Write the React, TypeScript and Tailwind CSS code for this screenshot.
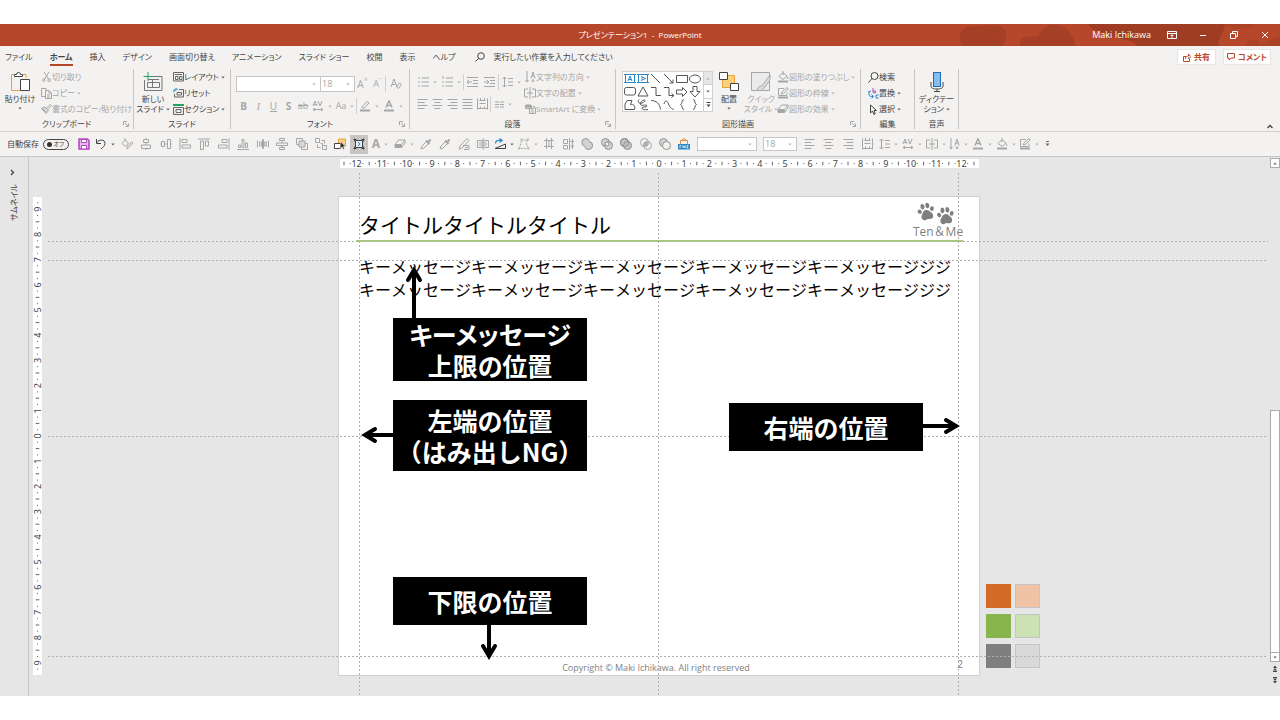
import React from "react";

type Kids = { children?: React.ReactNode };

/* ---------- small building blocks ---------- */

function Icon({ w = 12, h = 12, className = "", children }: Kids & { w?: number; h?: number; className?: string }) {
  return (
    <svg width={w} height={h} viewBox={`0 0 ${w} ${h}`} fill="none" stroke="currentColor" strokeWidth="1" className={`shrink-0 ${className}`} aria-hidden="true">
      {children}
    </svg>
  );
}

function Caret({ className = "" }: { className?: string }) {
  return (
    <svg width="4" height="3" viewBox="0 0 4 3" fill="currentColor" className={`shrink-0 opacity-80 ${className}`} aria-hidden="true">
      <path d="M.3 .6h3.400L2 2.500z" />
    </svg>
  );
}

function Tool({ label, caret, className = "", children }: Kids & { label: string; caret?: boolean; className?: string }) {
  return (
    <button type="button" aria-label={label} className={`flex h-4 items-center justify-center gap-1 ${className}`}>
      {children}
      {caret && <Caret />}
    </button>
  );
}

function Row({ icon, text, caret, className = "" }: { icon: React.ReactNode; text: string; caret?: boolean; className?: string }) {
  return (
    <button type="button" className={`flex h-4 items-center whitespace-nowrap ${className}`}>
      <span className="flex w-3 justify-center">{icon}</span>
      <span>{text}</span>
      {caret && <Caret className="ml-[2px]" />}
    </button>
  );
}

function Group({ label, launcher, className, children }: Kids & { label: string; launcher?: boolean; className: string }) {
  return (
    <section aria-label={label} className={`flex shrink-0 flex-col border-r border-[#c8c6c4] ${className}`}>
      <div className="flex h-12 items-start">{children}</div>
      <div className="relative flex h-3 items-center justify-center pt-[2px] leading-3">
        {label}
        {launcher && (
          <button type="button" aria-label={`${label}の詳細`} className="absolute right-1 top-1 text-[#a6a6a6]">
            <Icon w={6} h={6}>
              <path d="M.5 4V.5H4M2 2l3 3M5.500 2.500v3h-3" />
            </Icon>
          </button>
        )}
      </div>
    </section>
  );
}

function Combo({ label, value, className }: { label: string; value: string; className: string }) {
  return (
    <label className={`relative flex items-center border border-[#c8c6c4] bg-white text-[#a6a6a6] ${className}`}>
      <select aria-label={label} defaultValue={value} className="h-full w-full appearance-none bg-transparent pl-px text-[9px] leading-3 outline-none">
        <option value={value}>{value}</option>
      </select>
      <Caret className="pointer-events-none absolute right-1" />
    </label>
  );
}

const Bar = () => <span className="h-4 w-px shrink-0 bg-[#d2d0ce]" />;

/* ---------- icons ---------- */

const Lines = ({ d }: { d: string }) => (
  <Icon w={11} h={12}>
    <path d={d} />
  </Icon>
);
const AlignLeft = () => <Lines d="M.5 1.500h10M.5 4.500h7M.5 7.500h10M.5 10.500h7" />;
const AlignCenter = () => <Lines d="M.5 1.500h10M2.500 4.500h6M.5 7.500h10M2.500 10.500h6" />;
const AlignRight = () => <Lines d="M.5 1.500h10M3.500 4.500h7M.5 7.500h10M3.500 10.500h7" />;
const Justify = () => <Lines d="M.5 1.500h10M.5 4.500h10M.5 7.500h10M.5 10.500h10" />;
const Distribute = () => <Lines d="M.5.500v11M10.500.500v11M2.500 2.500h6M2.500 5.500h6M.5 10.500h10M3.500 8.500v2M7.500 8.500v2M3.500 0v3M7.500 0v3" />;
const LineSpacing = () => <Lines d="M2.500 1v10M.5 3l2-2 2 2M.5 9l2 2 2-2M6 2.500h5M6 6h5M6 9.500h5" />;
const CharSpacing = () => (
  <Icon w={12} h={12}>
    <path d="M1 6l2-5 2 5M2 4.500h2M6 1l2 5 2-5M1 9.500h10M3 8l-2 1.500 2 1.500M9 8l2 1.500-2 1.500" />
  </Icon>
);
const TextAlign = () => (
  <Icon>
    <path d="M4 2H.5v8H4M8 2h3.500v8H8M6 0v12M3 6h6" />
  </Icon>
);
const TextDir = () => (
  <Icon w={11}>
    <path d="M2 0v11M.5 9L2 11l1.500-2M6 7.500l2-6.500 2 6.500M6.700 5h2.600M8 8v3M6.700 9.700L8 11l1.300-1.300" />
  </Icon>
);
const Pen = () => (
  <Icon>
    <path d="M3 7l5-5.500 2 1.500-4.500 5L3 8z" />
    <path d="M1 10.500h10" strokeWidth="2" />
  </Icon>
);
const FontColor = () => (
  <Icon>
    <path d="M3 7.500L5.800 1h.4L9 7.500M4 5.500h4" strokeWidth="1.300" />
    <path d="M1 10.500h10" strokeWidth="2" />
  </Icon>
);
const Bucket = () => (
  <Icon>
    <path d="M2 5.500L6 1.500l4 3.500-4 3.500zM6 0v4M10 5.500l1 2.500" />
    <path d="M1 10.500h10" strokeWidth="2" />
  </Icon>
);
const Outline = () => (
  <Icon>
    <path d="M10 5.500v3H1.500V1.500H7M4 7l1-2 5-4.500L11.200 2 6.500 6.500z" />
    <path d="M1 10.500h10" strokeWidth="2" />
  </Icon>
);
const Effect = () => (
  <Icon>
    <path d="M1 6.500L4.500 2H11L7.500 6.500zM1 6.500v3h6.500v-3M7.500 9.500L11 5V2" />
    <path d="M1.500 7h5.500v2H1.500z" fill="currentColor" />
  </Icon>
);
const Dropper = () => (
  <Icon>
    <path d="M1 11l1-3 4.500-4.500 2 2L4 10z" />
    <path d="M6 2.500l3.500 3.500M8 4.500l2.500-3" strokeWidth="2" />
  </Icon>
);

const arrangeIcons: [string, React.ReactNode][] = [
  ["書式", <path d="M1 5.500L4 2l3.500 3L4.500 8.500zM4 0v3M6 9l4.500-5L12 5l-4 4.500L6 11z" />],
  ["左右中央揃え", <path d="M6 0v1.500M3.500 1.500h5v3h-5zM6 4.500V7M1.500 7h9v3.500h-9zM6 10.500V12" />],
  ["上下中央揃え", <path d="M1.500 3.500h3v5h-3zM7.500 1.500h3v9h-3zM0 6h1.500M4.500 6h3M10.500 6H12" />],
  ["左揃え", <path d="M1 0v12M3 1.500h5v3H3zM3 7h8.500v3H3z" />],
  ["上揃え", <path d="M0 1h12M2.500 3h3v8.500h-3zM7.500 3h3v5h-3z" />],
  ["右揃え", <path d="M11 0v12M4 1.500h5v3H4zM.5 7H9v3H.5z" />],
  ["下揃え", <path d="M0 11.500h12M1.500 7h2v2.500h-2zM5 1.500h2v8H5zM8.500 5h2v4.500h-2z" />],
  ["左右に整列", <path d="M.5 2.500v7M11.500 2.500v7M2.500 4h2v4h-2zM7.500 4h2v4h-2zM5.500 1.500h1v9h-1z" />],
  ["上下に整列", <path d="M3.500.500h5v2h-5zM.5 5h11v2.500H.5zM3.500 9.500h5v2h-5zM6 2.500V5M6 7.500v2" />],
  ["グループ化", <g><path d="M.5.500h6v6h-6zM5.500 8v3.500h6v-6H8" /><path d="M3 3h6v6H3z" fill="#d8d8d8" /></g>],
  ["グループ解除", <path d="M.5.500h4v4h-4zM7.500 7.500h4v4h-4zM6.500 2.500h3v3M5.500 9.500h-3v-3M5.500 5.500h2v2" />],
];

const shapeIcons: [string, React.ReactNode][] = [
  ["表", <path d="M1 2.500h10M1 8.500h10M3.500 0v11M8.500 0v11M6 2.500v6" />],
  ["セル", <path d="M1.500 1.500h4v4h-4zM1.500 7.500h4v3.500h-4zM7.500 0v12M7.500 3.500H12M7.500 8H12M10.500 1v10" />],
  ["接合", <path d="M4.500.500a4 4 0 0 1 3.800 3A4 4 0 1 1 3.700 8.300 4 4 0 0 1 4.500.500z" fill="#d2d2d2" stroke="#909090" />],
  ["型抜き", <g stroke="#909090"><circle cx="4.500" cy="4.500" r="4" fill="#d2d2d2" /><circle cx="7.500" cy="7.500" r="4" fill="#d2d2d2" /><circle cx="6" cy="6" r="2" fill="#f3f2f1" /></g>],
  ["切り出し", <g stroke="#909090"><circle cx="4.500" cy="4.500" r="4" fill="#c4c4c4" /><circle cx="7.500" cy="7.500" r="4" fill="#c4c4c4" /><circle cx="4.500" cy="4.500" r="4" /></g>],
  ["重なり抽出", <g><circle cx="4.500" cy="4.500" r="4" /><circle cx="7.500" cy="7.500" r="4" /><circle cx="6" cy="6" r="2" fill="#b4b4b4" /></g>],
  ["単純型抜き", <g stroke="#909090"><circle cx="4.500" cy="4.500" r="4" fill="#d2d2d2" /><circle cx="7.500" cy="7.500" r="4" fill="#f3f2f1" /></g>],
];

const gallery: [string, React.ReactNode][] = [
  ["テキスト ボックス", <g stroke="#2b88c8"><path d="M1.500 1.500h9v8h-9z" /><path d="M4 8l2-5 2 5M5 6.500h2M0 1.500h3M9 1.500h3M0 9.500h3M9 9.500h3" /></g>],
  ["縦書きテキスト", <g stroke="#2b88c8"><path d="M1.500 1.500h9v8h-9z" /><path d="M4 3.500l4.500 2L4 7.500M5 4.500v2M0 1.500h3M9 1.500h3M0 9.500h3M9 9.500h3" /></g>],
  ["線", <path d="M1 1l9 9" />],
  ["矢印", <path d="M1 1l9 9M6.500 10h3.500V6.500" />],
  ["正方形", <path d="M.5 2.500h11v7H.5z" />],
  ["楕円", <ellipse cx="6" cy="6" rx="5.500" ry="4" />],
  ["角丸四角形", <rect x=".5" y="1.500" width="11" height="7.500" rx="2" />],
  ["三角形", <path d="M6 1l5 9H1z" />],
  ["カギ線", <path d="M1 1.500h5v8h5" />],
  ["カギ線矢印", <path d="M1 1.500h5v8h5M8.500 7.500l2.500 2-2.500 2" />],
  ["右矢印", <path d="M.5 4h6V1.500L11 6l-4.500 4.500V8h-6z" />],
  ["下矢印", <path d="M4 .5h4v5h3L6 11 1 5.500h3z" />],
  ["フリーフォーム", <path d="M1 10.500V5l2-3.500h5l-1.500 4c3-.5 5 1 4 5z" />],
  ["曲線", <path d="M2 .5C0 3 2 5 5 4s4-3 2-3-5 4-3 5 6-1 6 1-5 0-5 2 3 2 6 1.500" />],
  ["円弧", <path d="M1 1.500c5 0 9 3 9.500 9" />],
  ["フリーハンド", <path d="M1 5c1-4 3-4 4.500 0S9 10 11 10.500" />],
  ["左中かっこ", <path d="M8 .5C5 .5 7 5 4.500 5.500 7 6 5 10.500 8 10.500" />],
  ["右中かっこ", <path d="M4 .5c3 0 1 4.500 3.500 5C5 6 7 10.500 4 10.500" />],
];

/* ---------- title bar and tabs ---------- */

function TitleBar() {
  return (
    <header className="relative grid h-[22px] grid-cols-[1fr_auto_1fr] items-center overflow-hidden bg-[#b7472a] text-[8px] text-white">
      <svg className="absolute right-0 top-0" width="320" height="22" viewBox="0 0 320 22" fill="#ab4327" aria-hidden="true">
        <path d="M0 17C-2 6 6 1 18 2c8 0 12-2 22 0 8 3 8 14 2 20H2z" fill="#a54026" />
        <path d="M60 22c-2-10 8-11 18-9 4-9 10-13 19-12 12 2 18 12 18 21z" fill="#a54026" />
        <path d="M128 0h137c0 8-8 14-6 22h-82c-4-8-18-6-26-10-4-4-20-4-23-12z" fill="#9f3d24" />
        <path d="M265 0h30c-3 6-22 6-28 2zM286 22c0-8 12-9 14-2l20-8v10z" />
      </svg>
      <span />
      <span className="relative whitespace-pre">プレゼンテーション1  -  PowerPoint</span>
      <div className="relative flex items-center justify-end">
        <span className="mr-[5px] text-[9px]">Maki Ichikawa</span>
        <button type="button" aria-label="リボンの表示オプション" className="flex w-[31px] justify-center">
          <Icon w={10} h={8}><path d="M.5.500h9v7h-9zM.5 2.500h9M5 7V4M3.500 5L5 3.500 6.500 5" /></Icon>
        </button>
        <button type="button" aria-label="最小化" className="flex w-[31px] justify-center">
          <Icon w={8} h={8}><path d="M1 4.500h6" /></Icon>
        </button>
        <button type="button" aria-label="元に戻す" className="flex w-[31px] justify-center">
          <Icon w={8} h={8}><path d="M.5 2.500h5v5h-5zM2.500 2V.5h5v5H6" /></Icon>
        </button>
        <button type="button" aria-label="閉じる" className="flex w-[31px] justify-center">
          <Icon w={8} h={8}><path d="M1 1l6 6M7 1L1 7" /></Icon>
        </button>
      </div>
    </header>
  );
}

const tabs = ["ファイル", "ホーム", "挿入", "デザイン", "画面切り替え", "アニメーション", "スライド ショー", "校閲", "表示", "ヘルプ"];

function Tabs() {
  return (
    <nav className="flex h-[22px] items-center pl-[5px] pr-[9px] text-[8px]">
      <div className="flex gap-[17px]">
        {tabs.map((t) => (
          <a key={t} href="#" className={t === "ホーム" ? "border-b-2 border-[#b7472a] pt-[2px] font-bold leading-[14px]" : "pt-[2px] leading-[14px]"}>
            {t}
          </a>
        ))}
      </div>
      <label className="ml-5 flex flex-1 items-center gap-2">
        <Icon w={10} h={10}><circle cx="6" cy="4" r="3.300" /><path d="M3.600 6.400L.5 9.500" /></Icon>
        <input aria-label="操作アシスト" placeholder="実行したい作業を入力してください" className="w-40 bg-transparent leading-4 outline-none placeholder:text-[#444]" />
      </label>
      <div className="flex gap-[7px] font-bold text-[#b7472a]">
        <button type="button" className="flex h-4 w-[39px] items-center justify-center gap-[3px] border border-[#e8e6e4] bg-white">
          <Icon w={8} h={9}><path d="M3 3.500H.5v5h6V6M2.500 6c0-2 1-3 3-3V1l2.300 2.500L5.500 6V4.500" /></Icon>
          共有
        </button>
        <button type="button" className="flex h-4 w-12 items-center justify-center gap-[3px] whitespace-nowrap border border-[#e8e6e4] bg-white">
          <Icon w={8} h={8}><path d="M.5.500h7v4.500H4L2 7V5H.5z" /></Icon>
          コメント
        </button>
      </div>
    </nav>
  );
}

/* ---------- ribbon ---------- */

function BigButton({ icon, lines, caret, className }: { icon: React.ReactNode; lines: string[]; caret: "below" | "inline"; className: string }) {
  return (
    <button type="button" className={`flex shrink-0 flex-col items-center whitespace-nowrap pt-[3px] leading-[10px] ${className}`}>
      {icon}
      <span className="mt-[2px]">{lines[0]}</span>
      {caret === "inline" ? (
        <span className="flex items-center gap-[2px]">{lines[1]}<Caret /></span>
      ) : (
        <Caret className="mt-[3px]" />
      )}
    </button>
  );
}

function Ribbon() {
  return (
    <div className="flex border-b border-[#d2d0ce] pb-[2px] pt-px">
      <Group label="クリップボード" launcher className="w-[134px]">
        <BigButton
          className="w-10"
          caret="below"
          lines={["貼り付け"]}
          icon={
            <Icon w={20} h={20}>
              <path d="M4 2.500H1.500v16h9M13 2.500h3V6" stroke="#eaa13b" />
              <path d="M4.500 4.500v-2h2a2 2 0 0 1 4 0h2v2z" fill="#fff" />
              <path d="M10.500 7.500h9v11h-9z" fill="#fff" />
            </Icon>
          }
        />
        <div className="flex flex-col text-[#a6a6a6]">
          <Row text="切り取り" icon={<Icon w={9} h={10}><path d="M2 0l4.500 7M7 0L2.500 7" /><circle cx="1.800" cy="8.200" r="1.300" /><circle cx="7.200" cy="8.200" r="1.300" /></Icon>} />
          <Row text="コピー" caret icon={<Icon w={11} h={11}><path d="M4 8.500H.5v-8H5v2M4.500 2.500H8l2.500 2.500v5.500h-6zM8 3v2h2M6 7h3M6 9h3" /></Icon>} />
          <Row text="書式のコピー/貼り付け" icon={<Icon w={11} h={10}><path d="M.5 4.500L4 3l3.500 3.500L5 9.500z" fill="#d8d8d8" /><path d="M5.500 4l4-3.500 1 1L7 5.500M2 5l3 3" /></Icon>} />
        </div>
      </Group>

      <Group label="スライド" className="w-[97px]">
        <BigButton
          className="w-[38px]"
          caret="inline"
          lines={["新しい", "スライド"]}
          icon={
            <Icon w={20} h={20}>
              <path d="M5 4.500h14v14H1.500V8M5 7.500h11M4.500 10.500h5v5h-5zM9.500 7v8.500M9.500 10.500h7v5h-7z" stroke="#777" />
              <path d="M5 0v9M.5 4.500h9" stroke="#22a366" />
            </Icon>
          }
        />
        <div className="flex flex-col">
          <Row text="レイアウト" caret icon={<Icon w={11} h={10}><path d="M.5.500h10v8.500H.5zM2 2.500h7M2.500 4.500h2.500v3H2.500zM6.500 4.500h2.500v3H6.500z" stroke="#666" /></Icon>} />
          <Row text="リセット" icon={<Icon w={11} h={10}><path d="M6 1.500h4.500V9H1.500V6M4 4.500h4.500v2.500H4z" stroke="#666" /><path d="M1 4.500V2h2.500M1 2.500c1-2 3-2 4-1" stroke="#2b88c8" /></Icon>} />
          <Row text="セクション" caret icon={<Icon w={11} h={11}><path d="M0 1h11" stroke="#22a366" strokeWidth="2" /><path d="M.5 3.500h10v7H.5zM3 5.500h5v3H3z" stroke="#666" /></Icon>} />
        </div>
      </Group>

      <Group label="フォント" launcher className="w-[179px]">
        <div className="flex flex-col gap-[6px] pl-[5px] pt-[7px] text-[#a6a6a6]">
          <div className="flex items-center">
            <Combo label="フォント名" value="" className="h-4 w-[85px]" />
            <Combo label="フォント サイズ" value="18" className="-ml-px h-4 w-[35px]" />
            <Tool label="拡大" className="w-[15px] text-[10px]">A<sup className="-ml-1 text-[7px]">^</sup></Tool>
            <Tool label="縮小" className="w-[15px] text-[9px]">A<sup className="-ml-1 text-[7px]">ˇ</sup></Tool>
            <Bar />
            <Tool label="書式のクリア" className="w-5"><Icon><path d="M1 9l3-8 3 8M2 6.500h3.500M6.500 9l3-4 2 1.500-3 4z" /></Icon></Tool>
          </div>
          <div className="flex items-center text-[10px]">
            <Tool label="太字" className="w-[15px] font-bold">B</Tool>
            <Tool label="斜体" className="w-[15px] font-[Liberation_Serif] italic">I</Tool>
            <Tool label="下線" className="w-[15px] underline">U</Tool>
            <Tool label="影" className="w-[15px] font-bold">S</Tool>
            <Tool label="取り消し線" className="w-[14px] text-[9px] line-through">ab</Tool>
            <Tool label="文字の間隔" caret className="w-6"><CharSpacing /></Tool>
            <Tool label="大文字小文字" caret className="w-[22px] text-[9px]">Aa</Tool>
            <Bar />
            <Tool label="蛍光ペン" caret className="w-6"><Pen /></Tool>
            <Tool label="フォントの色" caret className="w-6"><FontColor /></Tool>
          </div>
        </div>
      </Group>

      <Group label="段落" launcher className="w-[206px]">
        <div className="flex w-[114px] shrink-0 flex-col gap-[6px] pl-[5px] pt-[5px] text-[#a6a6a6]">
          <div className="flex items-center">
            <Tool label="箇条書き" caret className="w-6"><Lines d="M0 2h2M0 6h2M0 10h2M3.500 2H11M3.500 6H11M3.500 10H11" /></Tool>
            <Tool label="段落番号" caret className="w-6"><Lines d="M1 0v3M0 6h2M0 10h2M3.500 2H11M3.500 6H11M3.500 10H11" /></Tool>
            <Bar />
            <Tool label="インデント減" className="w-[17px]"><Lines d="M0 1.500h11M6 4.500h5M6 7.500h5M0 10.500h11M0 6h5M2 4L0 6l2 2" /></Tool>
            <Tool label="インデント増" className="w-[17px]"><Lines d="M0 1.500h11M6 4.500h5M6 7.500h5M0 10.500h11M0 6h5M3 4l2 2-2 2" /></Tool>
            <Bar />
            <Tool label="行間" caret className="w-6"><LineSpacing /></Tool>
          </div>
          <div className="flex items-center">
            <Tool label="左揃え" className="w-[15px]"><AlignLeft /></Tool>
            <Tool label="中央揃え" className="w-[15px]"><AlignCenter /></Tool>
            <Tool label="右揃え" className="w-[15px]"><AlignRight /></Tool>
            <Tool label="両端揃え" className="w-[15px]"><Justify /></Tool>
            <Tool label="均等割り付け" className="w-[15px]"><Distribute /></Tool>
            <Bar />
            <Tool label="段組み" caret className="w-6"><Icon w={9} h={9}><path d="M0 2h4M0 4.500h4M0 7h4M5 2h4M5 4.500h4M5 7h4" /></Icon></Tool>
          </div>
        </div>
        <div className="flex flex-col text-[#a6a6a6]">
          <Row text="文字列の方向" caret icon={<TextDir />} />
          <Row text="文字の配置" caret icon={<TextAlign />} />
          <Row text="SmartArt に変換" caret icon={<Icon w={11} h={10}><path d="M.5 1.500h6v3h-6zM4.500 4h6v5.500h-6zM6 6h3M6 8h3M8 2l2 1" /><path d="M1 1h5v2H1z" fill="currentColor" /></Icon>} />
        </div>
      </Group>

      <Group label="図形描画" launcher className="w-[245px]">
        <div className="ml-[6px] mt-[2px] flex shrink-0 border border-[#d2d0ce] bg-white">
          <div className="grid grid-cols-6 text-[#555]">
            {gallery.map(([name, art]) => (
              <button key={name} type="button" aria-label={name} className="flex h-[13px] w-[13px] items-center justify-center">
                <Icon w={12} h={12}>{art}</Icon>
              </button>
            ))}
          </div>
          <div className="ml-[2px] flex w-[9px] flex-col divide-y divide-[#d2d0ce] border-l border-[#d2d0ce]">
            <button type="button" aria-label="前の行" className="flex flex-1 items-center justify-center bg-[#e6e6e6] text-[#a6a6a6]"><Caret className="rotate-180" /></button>
            <button type="button" aria-label="次の行" className="flex flex-1 items-center justify-center"><Caret /></button>
            <button type="button" aria-label="その他" className="flex flex-1 items-center justify-center"><Icon w={5} h={6}><path d="M.5 .5h4" /><path d="M.5 2.500h4L2.500 5z" fill="currentColor" stroke="none" /></Icon></button>
          </div>
        </div>
        <BigButton
          className="w-8"
          caret="below"
          lines={["配置"]}
          icon={
            <Icon w={20} h={20}>
              <path d="M3.500 3.500h12v12h-12z" fill="#fbd17e" stroke="#eaa13b" />
              <path d="M.5.500h8v7h-8zM11.500 11.500h8v7h-8z" fill="#fff" />
            </Icon>
          }
        />
        <BigButton
          className="w-8 text-[#a6a6a6]"
          caret="inline"
          lines={["クイック", "スタイル"]}
          icon={
            <Icon w={20} h={20}>
              <path d="M.5.500h18v18H.5z" fill="#ebebeb" />
              <path d="M6 18c1-3 3-4 5-4l8-11v5l-6 8c-2 3-5 3-7 2z" fill="#ddd" />
            </Icon>
          }
        />
        <div className="flex flex-col text-[#a6a6a6]">
          <Row text="図形の塗りつぶし" caret icon={<Bucket />} />
          <Row text="図形の枠線" caret icon={<Outline />} />
          <Row text="図形の効果" caret icon={<Effect />} />
        </div>
      </Group>

      <Group label="編集" className="w-[54px]">
        <div className="flex flex-col pl-[6px]">
          <Row text="検索" icon={<Icon w={11} h={11}><circle cx="6.500" cy="4" r="3.500" /><path d="M4 6.500L.5 10.500" /></Icon>} />
          <Row text="置換" caret icon={<Icon w={11} h={11}><path d="M5 0v4.500M5 3h2.500v1.800H5" stroke="#b146c2" /><path d="M10.500 7H8v3h2.500M1 3v3.500C1 8 2 8.500 5 8.500M3.500 6.500l2 2-2 2M.5 4L3 3" stroke="#2b88c8" /></Icon>} />
          <Row text="選択" caret icon={<Icon w={8} h={11}><path d="M1.500 1v8l2-2 1.500 3.500 1.200-.6L5 6.500h2.500z" /></Icon>} />
        </div>
      </Group>

      <Group label="音声" className="w-[44px]">
        <BigButton
          className="w-full"
          caret="inline"
          lines={["ディクテー", "ション"]}
          icon={
            <Icon w={14} h={20}>
              <rect x="3.500" y=".5" width="7" height="14" fill="#83beec" stroke="#1e6fb8" />
              <path d="M1 10v4c0 2 2 3 6 3s6-1 6-3v-4M7 17v2.500M4 19.500h6" />
            </Icon>
          }
        />
      </Group>
      <button type="button" aria-label="リボンを折りたたむ" className="ml-auto mr-[7px] self-end">
        <Icon w={6} h={5}><path d="M.5 4L3 1.500 5.500 4" strokeWidth="1.300" /></Icon>
      </button>
    </div>
  );
}

/* ---------- quick access toolbar ---------- */

function QuickAccess() {
  return (
    <div className="flex h-[25px] items-center overflow-hidden border-b border-[#c8c6c4] text-[#a6a6a6]">
      <label className="flex w-[75px] shrink-0 items-center justify-between pl-[7px] pr-[6px] text-[#444]">
        自動保存
        <span className="relative flex h-[11px] w-[26px] items-center justify-end rounded-full border border-[#444] pr-1 text-[6px]">
          <input type="checkbox" className="absolute inset-0 appearance-none" />
          <span className="absolute left-[3px] h-[5px] w-[5px] rounded-full bg-[#333]" />
          オフ
        </span>
      </label>
      <Tool label="上書き保存" className="w-[18px] shrink-0 text-[#b146c2]">
        <Icon><path d="M1 1h8.500L11 2.500V11H1z" fill="#e3b9e8" strokeWidth="1.500" /><path d="M3.500 1.500h5v3h-5zM3.500 7.500h5V11h-5z" fill="#fff" /></Icon>
      </Tool>
      <Tool label="元に戻す" caret className="w-6 shrink-0 text-[#444]">
        <Icon><path d="M1.500 1v4.500H6M1.500 5C4 1 10 1 10 5.500c0 2.500-2 3.500-4 5.500" /></Icon>
      </Tool>
      <div className="flex w-[233px] shrink-0">
        {arrangeIcons.map(([name, art]) => (
          <Tool key={name} label={name} className="flex-1"><Icon>{art}</Icon></Tool>
        ))}
        <Tool label="選択ウィンドウ" className="flex-1 text-[#444]">
          <Icon><path d="M4.500 1h7v7h-7z" fill="#fbd17e" stroke="#eaa13b" /><path d="M.5 5.500h6v5h-6z" fill="#fff" /><path d="M6.500 3.500v7l1.700-1.500 1 2.500 1.200-.5-1-2.500h2z" fill="#333" stroke="#fff" strokeWidth=".4" /></Icon>
        </Tool>
      </div>
      <button type="button" aria-label="枠に合わせる" className="flex h-[19px] w-[18px] shrink-0 items-center justify-center bg-[#c8c6c4] text-[#444]">
        <Icon><path d="M2.500 2.500h7v7h-7z" fill="#e6eef5" /><path d="M.5 1.500h3M1.500.500v3M8.500 1.500h3M10.500.500v3M.5 10.500h3M1.500 8.500v3M8.500 10.500h3M10.500 8.500v3" /><path d="M5 4l2 2-2 2" stroke="#2b88c8" /></Icon>
      </button>
      <Tool label="ワードアート" caret className="w-6 shrink-0 font-['Open_Sans'] text-[12px] font-bold">A</Tool>
      <Tool label="図形の効果" caret className="w-6 shrink-0"><Effect /></Tool>
      <div className="flex w-[76px] shrink-0">
        <Tool label="スポイト 塗り" className="flex-1"><Dropper /></Tool>
        <Tool label="スポイト 線" className="flex-1"><Dropper /></Tool>
        <Tool label="スポイト 文字" className="flex-1"><Icon><path d="M1 11l1-3 7-7.500 2 2L4 10zM5 7.500h6v4H6M7 9.500h3" /></Icon></Tool>
        <Tool label="置換" className="flex-1"><Icon><path d="M.5 2.500H5v7H.5zM7 2.500h4.500v7H7zM6 0v12M2 5h2M2 7h2M8 5h2M8 7h2" /></Icon></Tool>
      </div>
      <Tool label="回転" caret className="w-6 shrink-0 text-[#444]"><Icon><path d="M1 10.500h10.500V6z" /><path d="M1.500 5.500C1.500 2.500 4 2 7.500 2.500M5.500.500l2.500 2-2.500 2" stroke="#2b88c8" strokeWidth="1.300" /></Icon></Tool>
      <Tool label="頂点の編集" caret className="w-[23px] shrink-0"><Icon><path d="M1.500 10.500L3.500 2h6L8 6l3 4.500z" strokeDasharray="2 1" /><path d="M0 9.500h2v2H0zM9.500 9.500h2v2h-2zM2.500.500h2v2h-2zM9 .5h2v2H9z" fill="#bbb" stroke="none" /></Icon></Tool>
      <div className="flex w-[155px] shrink-0">
        {shapeIcons.map(([name, art]) => (
          <Tool key={name} label={name} className="flex-1"><Icon>{art}</Icon></Tool>
        ))}
        <Tool label="図として保存" className="flex-1 text-[#2b88c8]">
          <Icon><path d="M0 6h12v5.500H0z" fill="#2b88c8" stroke="none" /><path d="M2 10V7.500h1M5 10V7.500L7 10V7.500M10.500 7.500H9V10h1.500" stroke="#fff" strokeWidth=".8" /><path d="M2.500 6V2.500h7V6M4 2L6 .5 8 2" stroke="#e08a3c" /></Icon>
        </Tool>
      </div>
      <Combo label="フォント名" value="" className="ml-[3px] h-[14px] w-[60px] shrink-0" />
      <Combo label="フォント サイズ" value="18" className="ml-[6px] h-[14px] w-[34px] shrink-0" />
      <div className="ml-[3px] flex w-[77px] shrink-0">
        <Tool label="左揃え" className="flex-1"><AlignLeft /></Tool>
        <Tool label="中央揃え" className="flex-1"><AlignCenter /></Tool>
        <Tool label="右揃え" className="flex-1"><AlignRight /></Tool>
        <Tool label="均等割り付け" className="flex-1"><Distribute /></Tool>
      </div>
      <div className="flex w-[164px] shrink-0">
        <Tool label="行間" caret className="flex-1"><LineSpacing /></Tool>
        <Tool label="文字の間隔" caret className="flex-1"><CharSpacing /></Tool>
        <Tool label="文字の配置" caret className="flex-1"><TextAlign /></Tool>
        <Tool label="文字列の方向" caret className="flex-1"><TextDir /></Tool>
        <Tool label="フォントの色" caret className="flex-1"><FontColor /></Tool>
        <Tool label="塗りつぶし" caret className="flex-1"><Bucket /></Tool>
        <Tool label="枠線" caret className="flex-1"><Outline /></Tool>
      </div>
      <button type="button" aria-label="カスタマイズ" className="ml-1 text-[#666]">
        <Icon w={5} h={6}><path d="M1 .5h3" /><path d="M.5 2.500h4L2.500 5z" fill="currentColor" stroke="none" /></Icon>
      </button>
    </div>
  );
}

/* ---------- workspace ---------- */

const STEP = 25.2;

function Marks({ from, to, zero, vertical }: { from: number; to: number; zero: number; vertical?: boolean }) {
  const items: React.ReactNode[] = [];
  const length = to - from;
  for (let q = -56; q <= 56; q++) {
    const p = zero + (q * STEP) / 4;
    if (p < 1 || p > length - 1) continue;
    const kind = ((q % 4) + 4) % 4;
    if (kind === 0) {
      items.push(
        <text key={q} x={vertical ? 0 : p} y={vertical ? 0 : 8} transform={vertical ? `translate(8 ${p}) rotate(-90)` : undefined} textAnchor="middle">
          {Math.abs(q / 4)}
        </text>
      );
    } else {
      const half = kind === 2 ? 1.8 : 0.5;
      items.push(
        <path key={q} d={vertical ? `M${4.5 - half} ${p}h${half * 2}` : `M${p} ${4.5 - half}v${half * 2}`} stroke="#666" />
      );
    }
  }
  return (
    <svg width={vertical ? 9 : length} height={vertical ? length : 9} fill="#444" className="block overflow-visible bg-white font-['Noto_Sans'] text-[9px]" aria-hidden="true">
      {items}
    </svg>
  );
}

const Paw = ({ x, y, r }: { x: number; y: number; r: number }) => (
  <g transform={`translate(${x} ${y}) rotate(${r})`}>
    <path d="M0 -1c2.800 0 3.500 2.500 5 4S6.200 8.800 3 8.800C1.500 8.800 1 8.200 0 8.200s-1.500.6-3 .6c-3.200 0-3.500-4.300-2-5.800S-2.800-1 0-1z" />
    <ellipse cx="-6.300" cy="-.8" rx="1.900" ry="2.400" transform="rotate(-25 -6.300 -.8)" />
    <ellipse cx="-2.400" cy="-5" rx="2" ry="2.800" />
    <ellipse cx="2.600" cy="-5" rx="2" ry="2.800" />
    <ellipse cx="6.300" cy="-.8" rx="1.900" ry="2.400" transform="rotate(25 6.300 -.8)" />
  </g>
);

function Slide() {
  return (
    <article className="relative flex h-[480px] w-[642px] flex-col border border-[#d0d0d0] bg-white text-black [font-kerning:none]">
      <h1 className="ml-[17px] mr-4 flex h-[45px] items-end border-b-2 border-[#a9c585] pb-[3px] pl-[3px] text-[21px] leading-[26px]">
        タイトルタイトルタイトル
      </h1>
      <p className="ml-[20px] mt-[13px] whitespace-nowrap text-[16px] leading-[23px]">
        キーメッセージキーメッセージキーメッセージキーメッセージキーメッセージジジ
        <br />
        キーメッセージキーメッセージキーメッセージキーメッセージキーメッセージジジ
      </p>
      <div className="absolute right-[11px] top-[4px] flex w-[60px] flex-col items-center text-[#7f7f7f]">
        <svg width="44" height="24" viewBox="0 0 44 24" fill="currentColor" aria-hidden="true">
          <Paw x={10} y={10} r={-14} />
          <Paw x={29.500} y={14} r={-8} />
        </svg>
        <span className="font-['Open_Sans','Noto_Sans_CJK_JP',sans-serif] text-[12px] leading-[14px]">Ten＆Me</span>
      </div>
      <footer className="mt-auto grid grid-cols-[1fr_auto_1fr] items-end pb-px pl-[10px] pr-4 font-['Open_Sans',sans-serif] text-[9px] leading-3 text-[#7f7f7f]">
        <span />
        <span>Copyright © Maki Ichikawa. All right reserved</span>
        <span className="pb-1 text-right text-[10px]">2</span>
      </footer>
    </article>
  );
}

const callouts: { at: string; lines: string[] }[] = [
  { at: "left-[346px] top-[161px] h-[63px] [font-feature-settings:'palt']", lines: ["キーメッセージ", "上限の位置"] },
  { at: "left-[346px] top-[243px] h-[71px]", lines: ["左端の位置", "（はみ出しNG）"] },
  { at: "left-[682px] top-[246px] h-12", lines: ["右端の位置"] },
  { at: "left-[346px] top-[420px] h-12", lines: ["下限の位置"] },
];

const swatches = ["bg-[#d16b25]", "bg-[#f0c3a6] border", "bg-[#87b54b]", "bg-[#cde2b4] border", "bg-[#7f7f7f]", "bg-[#d9d9d9] border"];

function Canvas() {
  return (
    <main className="relative flex-1 overflow-hidden pb-5 pl-[291px] pt-[2px]">
      <div className="pl-[2px]">
        <Marks from={340} to={979} zero={319} />
      </div>
      <div className="mt-[28px]">
        <Slide />
      </div>
      <div className="absolute left-[939px] top-[427px] grid grid-cols-2 gap-x-1 gap-y-[6px]">
        {swatches.map((c) => (
          <span key={c} className={`h-6 w-[25px] border-[#c4c4c4] ${c}`} />
        ))}
      </div>
      <svg className="absolute left-0 top-0 h-full w-full" stroke="#b0b0b0" strokeDasharray="2 2" fill="none" aria-hidden="true">
        <path d="M312.500 16v523M611.500 16v523M911.500 16v523" />
        <path d="M1 84.500h308M916 84.500h305M1 103.500h1220M1 279.500h1220M1 499.500h1220" />
      </svg>
      <svg className="absolute left-0 top-0 h-full w-full" stroke="#000" strokeWidth="4" strokeLinecap="round" fill="none" aria-hidden="true">
        <path d="M367 162v-48M361 123l6-10 6 10" />
        <path d="M347 278h-27M328 272l-10 6 10 6" />
        <path d="M875 269h32M899 263l10 6-10 6" />
        <path d="M442 467v30M436 489l6 10 6-10" />
      </svg>
      {callouts.map((c) => (
        <div key={c.at} className={`absolute flex w-[194px] flex-col items-center justify-center whitespace-nowrap bg-black text-[25px] font-bold leading-[31px] text-white ${c.at}`}>
          {c.lines.map((l) => (
            <span key={l}>{l}</span>
          ))}
        </div>
      ))}
    </main>
  );
}

function ScrollBar() {
  return (
    <aside className="flex w-[11px] flex-col items-center text-[#444]">
      <button type="button" aria-label="上へ" className="mt-px flex h-[10px] w-[10px] items-center justify-center border border-[#ababab] bg-white"><Caret className="rotate-180" /></button>
      <div className="flex w-[10px] flex-1 flex-col justify-end">
        <div className="h-[243px] border border-[#ababab] bg-white" />
      </div>
      <button type="button" aria-label="下へ" className="-mt-px flex h-[10px] w-[10px] items-center justify-center border border-[#ababab] bg-white"><Caret /></button>
      <button type="button" aria-label="前のスライド" className="mt-[3px]"><Icon w={6} h={7}><path d="M1 3L3 .5 5 3zM1 5.500L3 3l2 2.500z" fill="currentColor" stroke="none" /><path d="M1 6.500h4" /></Icon></button>
      <button type="button" aria-label="次のスライド" className="mb-3 mt-[5px]"><Icon w={6} h={7}><path d="M1 4h4L3 6.500zM1 1.500h4L3 4z" fill="currentColor" stroke="none" /><path d="M1 .5h4" /></Icon></button>
    </aside>
  );
}

export default function App() {
  return (
    <div className="min-h-screen bg-white py-6 font-['Open_Sans','Noto_Sans_CJK_JP',sans-serif] text-[#444]" lang="ja">
      <div className="bg-[#f3f2f1] text-[8px] [font-feature-settings:'palt']">
        <TitleBar />
        <Tabs />
        <Ribbon />
        <QuickAccess />
      </div>
      <div className="flex bg-[#e6e6e6]">
        <aside className="flex w-[29px] flex-col items-center gap-2 border-r border-[#c8c8c8] pt-3 text-[8px]">
          <button type="button" aria-label="サムネイルを展開" className="mr-1"><Icon w={5} h={7}><path d="M1 1l2.500 2.500L1 6" strokeWidth="1.300" /></Icon></button>
          <span className="mr-px rotate-180 [font-feature-settings:'palt'] [text-orientation:sideways] [writing-mode:vertical-rl]">サムネイル</span>
        </aside>
        <div className="w-[18px] pl-1 pt-10">
          <Marks vertical from={197} to={675} zero={239} />
        </div>
        <div className="flex flex-1 font-['Noto_Sans_CJK_JP',sans-serif]">
          <Canvas />
        </div>
        <ScrollBar />
      </div>
    </div>
  );
}
